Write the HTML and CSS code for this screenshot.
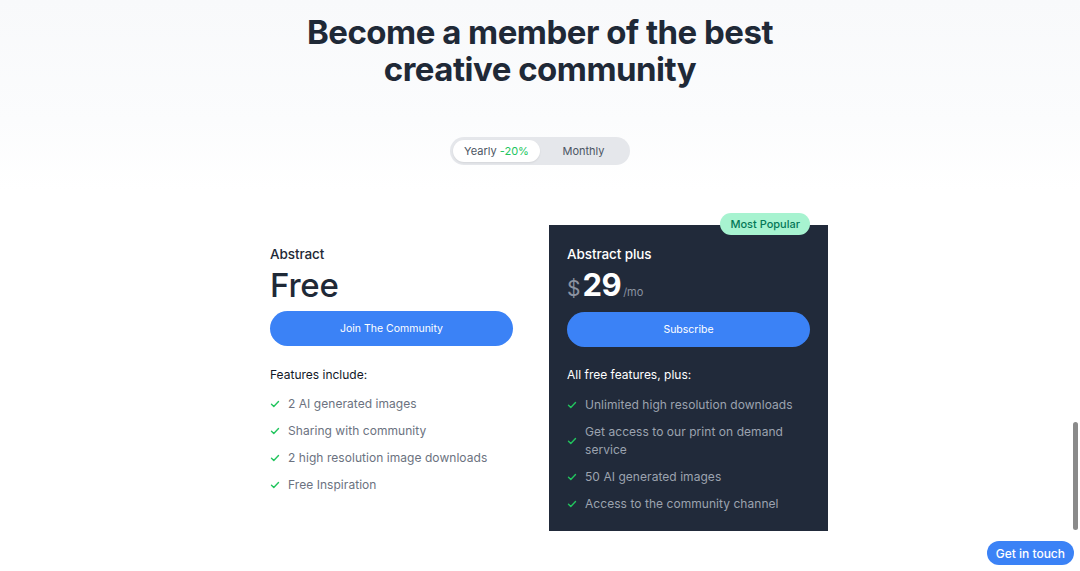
FILE: index.html
```html
<!DOCTYPE html>
<html lang="en">
<head>
<meta charset="utf-8">
<title>Pricing</title>
<link rel="stylesheet" href="styles.css">
</head>
<body>
<main class="page">
  <section class="hero">
    <h1 class="title">Become a member of the best<br>creative community</h1>
    <div class="toggle">
      <button class="toggle-opt active">Yearly <span class="discount">-20%</span></button>
      <button class="toggle-opt">Monthly</button>
    </div>
  </section>
  <section class="plans">
    <article class="plan">
      <h2 class="plan-name">Abstract</h2>
      <div class="price"><span class="free">Free</span></div>
      <button class="cta">Join The Community</button>
      <h3 class="feat-title">Features include:</h3>
      <ul class="features">
        <li><svg class="check" viewBox="0 0 10 10"><path d="M1.5 5.3l2.3 2.2 4.7-4.9"/></svg><span>2 AI generated images</span></li>
        <li><svg class="check" viewBox="0 0 10 10"><path d="M1.5 5.3l2.3 2.2 4.7-4.9"/></svg><span>Sharing with community</span></li>
        <li><svg class="check" viewBox="0 0 10 10"><path d="M1.5 5.3l2.3 2.2 4.7-4.9"/></svg><span>2 high resolution image downloads</span></li>
        <li><svg class="check" viewBox="0 0 10 10"><path d="M1.5 5.3l2.3 2.2 4.7-4.9"/></svg><span>Free Inspiration</span></li>
      </ul>
    </article>
    <article class="plan dark">
      <span class="badge">Most Popular</span>
      <h2 class="plan-name">Abstract plus</h2>
      <div class="price"><span class="cur">$</span><span class="amount">29</span><span class="per">/mo</span></div>
      <button class="cta">Subscribe</button>
      <h3 class="feat-title">All free features, plus:</h3>
      <ul class="features">
        <li><svg class="check" viewBox="0 0 10 10"><path d="M1.5 5.3l2.3 2.2 4.7-4.9"/></svg><span>Unlimited high resolution downloads</span></li>
        <li><svg class="check" viewBox="0 0 10 10"><path d="M1.5 5.3l2.3 2.2 4.7-4.9"/></svg><span>Get access to our print on demand service</span></li>
        <li><svg class="check" viewBox="0 0 10 10"><path d="M1.5 5.3l2.3 2.2 4.7-4.9"/></svg><span>50 AI generated images</span></li>
        <li><svg class="check" viewBox="0 0 10 10"><path d="M1.5 5.3l2.3 2.2 4.7-4.9"/></svg><span>Access to the community channel</span></li>
      </ul>
    </article>
  </section>
</main>
<button class="touch">Get in touch</button>
<div class="scroll-thumb"></div>
</body>
</html>
```
FILE: styles.css
```css
* { box-sizing: border-box; }
html, body { margin: 0; padding: 0; }
body {
  font-family: Inter, "Noto Sans", sans-serif;
  color: #1f2937;
  background: linear-gradient(to bottom, #f8f9fb 0px, #fbfcfd 120px, #ffffff 190px, #ffffff 100%);
  height: 571px;
  overflow: hidden;
}
.page { display: flex; flex-direction: column; align-items: center; }
.hero { display: flex; flex-direction: column; align-items: center; padding-top: 14px; }
.title {
  margin: 0;
  font-size: 33px;
  line-height: 37px;
  font-weight: 700;
  letter-spacing: -0.5px;
  text-align: center;
  color: #1f2937;
}
.toggle {
  margin-top: 49px;
  display: flex;
  width: 180px;
  height: 28px;
  padding: 3px;
  background: #e5e7eb;
  border-radius: 14px;
}
.toggle-opt {
  border: 0;
  background: transparent;
  font-family: inherit;
  font-size: 11px;
  color: #4b5563;
  border-radius: 11px;
  padding: 0;
  cursor: pointer;
}
.toggle-opt:first-child { width: 87px; }
.toggle-opt:last-child { flex: 1; }
.toggle-opt.active { background: #fff; box-shadow: 0 1px 2px rgba(0,0,0,0.08); }
.discount { color: #22c55e; }
.plans { display: flex; gap: 18px; margin-top: 60px; }
.plan {
  position: relative;
  width: 279px;
  padding: 20px 18px 18px;
  display: flex;
  flex-direction: column;
}
.plan.dark { background: #212a3a; color: #fff; }
.badge {
  position: absolute;
  top: -12px;
  right: 18px;
  background: #a7f3d0;
  color: #047857;
  font-size: 11px;
  font-weight: 500;
  line-height: 22px;
  padding: 0 10px;
  border-radius: 11px;
}
.plan-name { margin: 0; font-size: 13.5px; line-height: 18px; font-weight: 500; letter-spacing: -0.1px; }
.price { display: flex; align-items: baseline; height: 38px; margin-top: 3px; }
.free { font-size: 33px; font-weight: 500; line-height: 38px; color: #1f2937; letter-spacing: -0.2px; }
.cur { font-size: 21px; color: #8b93a1; margin-right: 2px; }
.amount { font-size: 31px; font-weight: 700; line-height: 38px; letter-spacing: -0.5px; }
.per { font-size: 11px; color: #8b93a1; margin-left: 2px; }
.cta {
  margin-top: 7px;
  height: 35px;
  width: 100%;
  border: 0;
  border-radius: 18px;
  background: #3b82f6;
  color: #fff;
  font-family: inherit;
  font-size: 10.5px;
  cursor: pointer;
}
.dark .cta { margin-top: 8px; }
.feat-title { margin: 21px 0 0; font-size: 12px; line-height: 16px; font-weight: 400; color: #111827; }
.dark .feat-title { color: #fff; margin-top: 20px; }
.features { list-style: none; margin: 12px 0 0; padding: 0; display: flex; flex-direction: column; gap: 9px; }
.dark .features { margin-top: 13px; }
.features li { display: flex; align-items: center; gap: 8px; font-size: 12px; line-height: 18px; color: #6b7280; letter-spacing: 0.05px; }
.dark .features li { color: #9ca3af; }
.check { width: 10px; height: 10px; flex: none; fill: none; stroke: #22c55e; stroke-width: 1.4; stroke-linecap: round; stroke-linejoin: round; }
.touch {
  position: fixed;
  right: 6px;
  bottom: 6px;
  height: 24px;
  padding: 0 9px;
  border: 0;
  border-radius: 12px;
  background: #3b82f6;
  color: #fff;
  font-family: inherit;
  font-size: 12px;
  font-weight: 500;
}
.scroll-thumb {
  position: fixed;
  right: 2px;
  top: 422px;
  width: 5px;
  height: 108px;
  background: #8a8a8a;
  border-radius: 3px;
}
```
